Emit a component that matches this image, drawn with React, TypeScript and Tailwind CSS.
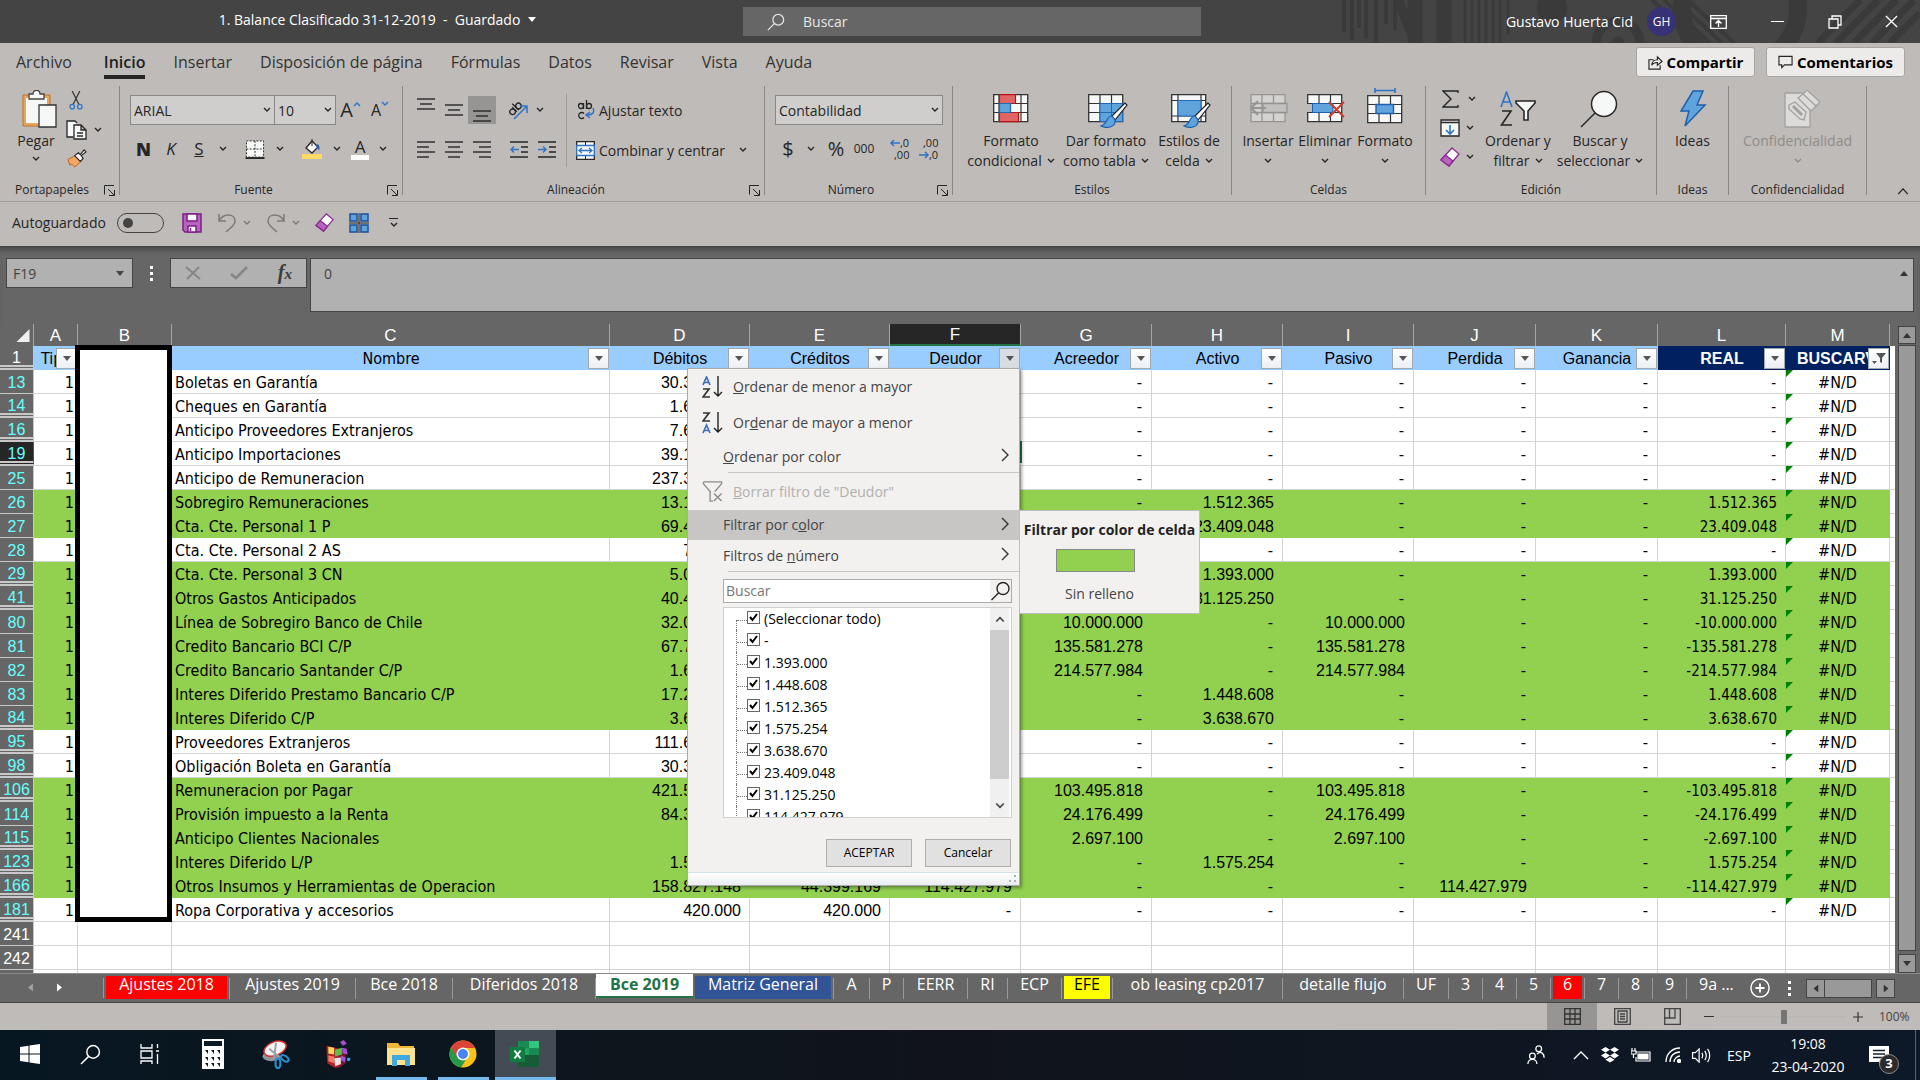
import type { ReactNode } from "react";

// Fondo y tipografía de la interfaz
const UI = "font-['Open_Sans','Noto_Sans',sans-serif]";
const TAHOMA = "font-['DejaVu_Sans_Condensed','DejaVu_Sans',sans-serif]";

/* ---------- Datos de la hoja ---------- */

type Fila = {
  n: string;
  salto?: boolean; // hay filas ocultas debajo
  verde?: boolean;
  nombre: string;
  v: string[]; // D..L
};

const G = "-";

const FILAS: Fila[] = [
  { n: "13", nombre: "Boletas en Garantía", v: ["30.312.450", "", "", G, G, G, G, G, G] },
  { n: "14", salto: true, nombre: "Cheques en Garantía", v: ["1.620.000", "", "", G, G, G, G, G, G] },
  { n: "16", salto: true, nombre: "Anticipo Proveedores Extranjeros", v: ["7.645.120", "", "", G, G, G, G, G, G] },
  { n: "19", salto: true, nombre: "Anticipo Importaciones", v: ["39.120.340", "", "", G, G, G, G, G, G] },
  { n: "25", nombre: "Anticipo de Remuneracion", v: ["237.350.210", "", "", G, G, G, G, G, G] },
  { n: "26", verde: true, nombre: "Sobregiro Remuneraciones", v: ["13.140.220", "", "", G, "1.512.365", G, G, G, "1.512.365"] },
  { n: "27", verde: true, nombre: "Cta. Cte. Personal 1 P", v: ["69.410.300", "", "", G, "23.409.048", G, G, G, "23.409.048"] },
  { n: "28", nombre: "Cta. Cte. Personal 2 AS", v: ["720.000", "", "", G, G, G, G, G, G] },
  { n: "29", salto: true, verde: true, nombre: "Cta. Cte. Personal 3 CN", v: ["5.020.000", "", "", G, "1.393.000", G, G, G, "1.393.000"] },
  { n: "41", salto: true, verde: true, nombre: "Otros Gastos Anticipados", v: ["40.450.100", "", "", G, "31.125.250", G, G, G, "31.125.250"] },
  { n: "80", verde: true, nombre: "Línea de Sobregiro Banco de Chile", v: ["32.000.000", "", "", "10.000.000", G, "10.000.000", G, G, "-10.000.000"] },
  { n: "81", verde: true, nombre: "Credito Bancario BCI C/P", v: ["67.710.400", "", "", "135.581.278", G, "135.581.278", G, G, "-135.581.278"] },
  { n: "82", verde: true, nombre: "Credito Bancario Santander C/P", v: ["1.640.200", "", "", "214.577.984", G, "214.577.984", G, G, "-214.577.984"] },
  { n: "83", verde: true, nombre: "Interes Diferido Prestamo Bancario C/P", v: ["17.230.100", "", "", G, "1.448.608", G, G, G, "1.448.608"] },
  { n: "84", salto: true, verde: true, nombre: "Interes Diferido C/P", v: ["3.638.670", "", "", G, "3.638.670", G, G, G, "3.638.670"] },
  { n: "95", salto: true, nombre: "Proveedores Extranjeros", v: ["111.640.300", "", "", G, G, G, G, G, G] },
  { n: "98", salto: true, nombre: "Obligación Boleta en Garantía", v: ["30.312.450", "", "", G, G, G, G, G, G] },
  { n: "106", salto: true, verde: true, nombre: "Remuneracion por Pagar", v: ["421.530.200", "", "", "103.495.818", G, "103.495.818", G, G, "-103.495.818"] },
  { n: "114", verde: true, nombre: "Provisión impuesto a la Renta", v: ["84.310.500", "", "", "24.176.499", G, "24.176.499", G, G, "-24.176.499"] },
  { n: "115", salto: true, verde: true, nombre: "Anticipo Clientes Nacionales", v: ["", "", "", "2.697.100", G, "2.697.100", G, G, "-2.697.100"] },
  { n: "123", salto: true, verde: true, nombre: "Interes Diferido L/P", v: ["1.575.254", "", "", G, "1.575.254", G, G, G, "1.575.254"] },
  { n: "166", salto: true, verde: true, nombre: "Otros Insumos y Herramientas de Operacion", v: ["158.827.148", "44.399.169", "114.427.979", G, G, G, "114.427.979", G, "-114.427.979"] },
  { n: "181", salto: true, nombre: "Ropa Corporativa y accesorios", v: ["420.000", "420.000", G, G, G, G, G, G, G] },
];

const COLUMNAS = [
  { letra: "A", ancho: "w-[44px]", titulo: "Tipo", tahoma: true },
  { letra: "B", ancho: "w-[94px]", titulo: "" },
  { letra: "C", ancho: "", titulo: "Nombre", tahoma: true },
  { letra: "D", ancho: "w-[140px]", titulo: "Débitos" },
  { letra: "E", ancho: "w-[140px]", titulo: "Créditos" },
  { letra: "F", ancho: "w-[131px]", titulo: "Deudor" },
  { letra: "G", ancho: "w-[131px]", titulo: "Acreedor" },
  { letra: "H", ancho: "w-[131px]", titulo: "Activo" },
  { letra: "I", ancho: "w-[131px]", titulo: "Pasivo" },
  { letra: "J", ancho: "w-[122px]", titulo: "Perdida" },
  { letra: "K", ancho: "w-[122px]", titulo: "Ganancia" },
  { letra: "L", ancho: "w-[128px]", titulo: "REAL", azul: true },
  { letra: "M", ancho: "w-[104px]", titulo: "BUSCARV", azul: true },
];

const HOJAS = [
  { t: "Ajustes 2018", w: "w-[126px]", c: "bg-[#ff0000] text-white" },
  { t: "Ajustes 2019", w: "w-[126px]" },
  { t: "Bce 2018", w: "w-[97px]" },
  { t: "Diferidos 2018", w: "w-[143px]" },
  { t: "Bce 2019", w: "w-[97px]", activa: true },
  { t: "Matriz General", w: "w-[141px]", c: "bg-[#305496] text-white" },
  { t: "A", w: "w-[36px]" },
  { t: "P", w: "w-[34px]" },
  { t: "EERR", w: "w-[64px]" },
  { t: "RI", w: "w-[40px]" },
  { t: "ECP", w: "w-[54px]" },
  { t: "EFE", w: "w-[51px]", c: "bg-[#ffff00] text-black" },
  { t: "ob leasing cp2017", w: "w-[170px]" },
  { t: "detalle flujo", w: "w-[121px]" },
  { t: "UF", w: "w-[45px]" },
  { t: "3", w: "w-[34px]" },
  { t: "4", w: "w-[34px]" },
  { t: "5", w: "w-[34px]" },
  { t: "6", w: "w-[34px]", c: "bg-[#ff0000] text-white" },
  { t: "7", w: "w-[34px]" },
  { t: "8", w: "w-[34px]" },
  { t: "9", w: "w-[34px]" },
];

const VALORES = ["(Seleccionar todo)", "-", "1.393.000", "1.448.608", "1.512.365", "1.575.254", "3.638.670", "23.409.048", "31.125.250", "114.427.979"];

/* ---------- Piezas pequeñas ---------- */

function Chev({ className = "" }: { className?: string }) {
  return (
    <svg viewBox="0 0 8 6" className={`h-[6px] w-[8px] shrink-0 ${className}`} fill="none" stroke="currentColor" strokeWidth="1.4">
      <path d="M1 1l3 3 3-3" />
    </svg>
  );
}

function Flecha({ className = "" }: { className?: string }) {
  return (
    <svg viewBox="0 0 8 5" className={`h-[5px] w-[8px] ${className}`} fill="currentColor">
      <path d="M0 0h8L4 5z" />
    </svg>
  );
}

function Lupa({ className = "" }: { className?: string }) {
  return (
    <svg viewBox="0 0 20 20" className={className} fill="none" stroke="currentColor" strokeWidth="1.4">
      <circle cx="12.5" cy="7.5" r="6" />
      <path d="M8.2 11.8L1 19" />
    </svg>
  );
}

function Btn({ w, label, children, className = "" }: { w: string; label: string; children: ReactNode; className?: string }) {
  return (
    <button type="button" aria-label={label} className={`flex h-7 shrink-0 items-center justify-center ${w} ${className}`}>
      {children}
    </button>
  );
}

function Sep() {
  return <span className="h-[27px] w-px shrink-0 bg-[#a19d9a]" />;
}

function Grupo({ titulo, w, lanzador, children }: { titulo: string; w: string; lanzador?: boolean; children: ReactNode }) {
  return (
    <section aria-label={titulo} className={`flex h-[109px] shrink-0 flex-col border-r border-[#8a8886] ${w}`}>
      <div className="flex h-[96px] w-full shrink-0">{children}</div>
      <div className="flex h-4 shrink-0 items-center">
        <span className="flex-1 text-center text-[12px] leading-4">{titulo}</span>
        {lanzador && (
          <button type="button" aria-label={`Configuración de ${titulo}`} className="mr-px w-[14px]">
            <svg viewBox="0 0 11 11" className="h-[11px] w-[11px]" fill="none" stroke="#262626">
              <path d="M.5 9.500V.500H10M4 4l6 6M10.500 5v5.500H5" />
            </svg>
          </button>
        )}
      </div>
    </section>
  );
}

function Grande({ w, icono, l1, l2, className = "" }: { w: string; icono: ReactNode; l1: string; l2?: string; className?: string }) {
  return (
    <button type="button" className={`flex shrink-0 flex-col items-center pt-1 ${w} ${className}`}>
      <span className="flex h-[41px] items-center justify-center pb-1">{icono}</span>
      <span className="text-[14px] leading-5 whitespace-nowrap">{l1}</span>
      {l2 !== undefined && (
        <span className="flex h-5 items-center gap-[5px] text-[14px] leading-5 whitespace-nowrap">
          {l2}
          <Chev />
        </span>
      )}
    </button>
  );
}

function Lineas({ xs }: { xs: number[][] }) {
  return (
    <svg viewBox={`0 0 18 ${xs.length * 5 - 3}`} className="w-[18px]" stroke="#262626" strokeWidth="1.400">
      {xs.map(([a, b], i) => (
        <path key={i} d={`M${a} ${i * 5 + 1}H${b}`} />
      ))}
    </svg>
  );
}

/* ---------- Iconos de la cinta ---------- */

const iconoPegar = (
  <svg viewBox="0 0 36 38" className="ml-[5px] h-[38px] w-[36px] shrink-0">
    <path d="M2 5h27v31H2z" fill="#e8a65c" stroke="#c0702a" />
    <path d="M5 8h21v25H5z" fill="#f6f8f8" />
    <path d="M8 9V4h4c0-5 7-5 7 0h4v5z" fill="#f6f8f8" stroke="#444" strokeWidth="1.300" />
    <path d="M18 15h17v22H18z" fill="#f6f8f8" stroke="#333" strokeWidth="1.300" />
  </svg>
);
const rejilla = (
  <>
    <path d="M.7.7h34v27H.7z" fill="#f6f8f8" stroke="#333" strokeWidth="1.300" />
    <path d="M0 9.500h35M0 18.500h35M12 0v28M23.500 0v28" stroke="#333" strokeWidth="1.200" />
  </>
);
const pincel = (
  <>
    <path d="M37 9L24 22l3 4L39 11z" fill="#fff" stroke="#222" strokeWidth="1.200" />
    <path d="M24 22c-6 0-4 8-11 10 6 3 15 1 14-6z" fill="#5fa4dc" stroke="#1e5fae" strokeWidth="1.200" />
  </>
);
const iconoCondicional = (
  <svg viewBox="0 0 36 29" className="h-[29px] w-[36px]">
    <path d="M.7.7h34v27H.7z" fill="#f6f8f8" stroke="#333" strokeWidth="1.300" />
    <path d="M0 9.500h35M0 18.500h35M6 0v28M28 0v28" stroke="#333" strokeWidth="1.200" />
    <path d="M6.500.7h16v8.800h-16zM6.500 18.500h19v9.200h-19z" fill="#e06666" stroke="#b8141c" strokeWidth="1.200" />
    <path d="M6.500 9.500h11v9h-11z" fill="#5fa4dc" stroke="#2468b4" strokeWidth="1.200" />
  </svg>
);
const iconoTabla = (
  <svg viewBox="0 0 40 34" className="mt-1 ml-1 h-[34px] w-[40px]">
    {rejilla}
    <path d="M12 9.500h22.500v18H12z" fill="#5fa4dc" stroke="#2468b4" />
    <path d="M23.500 9.500v18M12 18.500h22" stroke="#2468b4" />
    {pincel}
  </svg>
);
const iconoEstilos = (
  <svg viewBox="0 0 40 34" className="mt-1 ml-1 h-[34px] w-[40px]">
    <path d="M.7.7h34v27H.7z" fill="#f6f8f8" stroke="#333" strokeWidth="1.300" />
    <path d="M0 6.500h35M0 22h35M7 0v28M30 0v28" stroke="#333" strokeWidth="1.200" />
    <path d="M7 6.500h23V22H7z" fill="#5fa4dc" stroke="#2468b4" />
    {pincel}
  </svg>
);
const iconoInsertar = (
  <svg viewBox="0 0 38 29" className="ml-[2px] h-[29px] w-[38px]" stroke="#969492" strokeWidth="1.300">
    <path d="M1 .7h34v27H1z" fill="#d4d2d0" />
    <path d="M1 9.500h34M1 18.500h34M12 0v28M23.500 0v28" />
    <path d="M13 9.500h24v9H13z" fill="#c3c1bf" />
    <path d="M16 14H1m7-7l-7 7 7 7" fill="none" strokeWidth="2" />
  </svg>
);
const iconoEliminar = (
  <svg viewBox="0 0 38 29" className="ml-[2px] h-[29px] w-[38px]">
    {rejilla}
    <path d="M0 10h5v8H0z" fill="#bfbbb8" />
    <path d="M5.500 9.500H26v9H5.500z" fill="#5fa4dc" stroke="#1e5fae" />
    <path d="M22 8l15 15M37 8L22 23" stroke="#d03a2b" strokeWidth="2" />
  </svg>
);
const iconoFormato = (
  <svg viewBox="0 0 36 36" className="mb-[5px] h-[36px] w-[36px]">
    <path d="M8 2.500h20M8 0v5M28 0v5" stroke="#2f73c4" strokeWidth="1.600" />
    <g transform="translate(0 7)">
      {rejilla}
      <path d="M9 9.500h17.500v9H9z" fill="#5fa4dc" stroke="#1e5fae" strokeWidth="1.400" />
    </g>
  </svg>
);
const iconoOrdenar = (
  <svg viewBox="0 0 36 36" className="h-[36px] w-[36px]" fill="none" strokeWidth="1.600">
    <path d="M1 16L6.500 1 12 16M3 11h7" stroke="#2f73c4" />
    <path d="M2 20h9L1.500 34H12" stroke="#262626" />
    <path d="M16 10h19v2l-7 8v9h-4v-9l-8-8z" fill="#f6f8f8" stroke="#262626" />
  </svg>
);
const iconoBuscar = (
  <svg viewBox="0 0 38 38" className="mr-[2px] h-[38px] w-[38px]" stroke="#262626" strokeWidth="1.500">
    <circle cx="24" cy="14" r="12.500" fill="#f6f8f8" />
    <path d="M15 23L1 37" />
  </svg>
);
const iconoIdeas = (
  <svg viewBox="0 0 28 37" className="h-[37px] w-[28px]">
    <path d="M14 1h10l-6 14h8L6 36l4-15H2z" fill="#5fa4dc" stroke="#1e5fae" strokeWidth="1.500" />
  </svg>
);
const iconoConfid = (
  <svg viewBox="0 0 36 38" className="ml-2 h-[38px] w-[36px]" stroke="#a3a1a0" strokeWidth="1.300" fill="#dddbda">
    <path d="M1 3h25v34H1z" />
    <path d="M5 15l6-3 11 10-2 8-4-1L5 19z" />
    <path d="M9 16l9 9" strokeWidth="3" />
    <path d="M14 8l6-5 13 12-6 6z" />
    <path d="M19 4l4-4 13 12-4 4z" />
  </svg>
);
function Borrador({ className = "" }: { className?: string }) {
  return (
    <svg viewBox="0 0 20 20" className={className} stroke="#8a2a90" strokeWidth="1.300">
      <path d="M12 1l7 6-10 12-8-6z" fill="#fff" />
      <path d="M5.500 8L13 14l-4 5-8-6z" fill="#b565bd" />
    </svg>
  );
}

/* ---------- Barra de título ---------- */

function BarraTitulo() {
  return (
    <header className="relative flex h-[43px] items-center bg-[#444444] text-[14px] text-white">
      <svg viewBox="0 0 580 43" className="absolute top-0 right-0 h-[43px] w-[580px]" stroke="#3a3a3a" fill="none">
        <path d="M4 0v32M12 0v40M19 0v28M26 0v38M36 0v43M46 0v24M55 0v30" strokeWidth="4" />
        <path d="M75 0v43M104 0v43" strokeWidth="15" />
        <path d="M58 0l14 34" strokeWidth="10" />
        <path d="M125 0v43M132 0v43M139 0v43M146 0v43M153 0v43M160 0v43M168 0v35" strokeWidth="3" />
        <circle cx="212" cy="8" r="15" fill="#3a3a3a" />
        <circle cx="278" cy="43" r="22" strokeWidth="9" />
        <circle cx="278" cy="43" r="6" fill="#3a3a3a" />
        <path d="M312 0l46 43M324 0l46 43M336 0l46 43M348 0l46 43" strokeWidth="4" />
        <circle cx="400" cy="8" r="58" strokeWidth="18" />
        <path d="M478 43L520 0M496 43L538 0M514 43L556 0M532 43L574 0M550 43l30-30" strokeWidth="7" />
      </svg>
      <div className="flex w-[743px] items-center justify-center gap-2 pb-[5px] pl-3">
        <span>1. Balance Clasificado 31-12-2019&nbsp; -&nbsp; Guardado</span>
        <Flecha />
      </div>
      <label className="flex h-[29px] w-[458px] items-center bg-[#666666] pl-6 text-[#e6e6e6]">
        <Lupa className="h-[18px] w-[18px]" />
        <input aria-label="Buscar" placeholder="Buscar" className="ml-[18px] w-80 bg-transparent outline-none placeholder:text-[#e6e6e6]" />
      </label>
      <div className="relative flex flex-1 items-center justify-end">
        <span>Gustavo Huerta Cid</span>
        <span className="ml-[14px] flex h-[29px] w-[29px] items-center justify-center rounded-full bg-[#373277] text-[12px]">GH</span>
        <button type="button" aria-label="Opciones de la cinta" className="ml-[34px]">
          <svg viewBox="0 0 17 14" className="h-[14px] w-[17px]" fill="none" stroke="#fff" strokeWidth="1.300">
            <path d="M.7.700h15.600v12.600H.7zM0 3.500h17M8.500 12V6M5.500 8.500l3-3 3 3" />
          </svg>
        </button>
        <button type="button" aria-label="Minimizar" className="ml-[44px] h-px w-[13px] bg-white" />
        <button type="button" aria-label="Restaurar" className="ml-[44px]">
          <svg viewBox="0 0 14 14" className="h-[14px] w-[14px]" fill="none" stroke="#fff" strokeWidth="1.300">
            <path d="M1 4h9v9H1zM4 4V1h9v9h-3" />
          </svg>
        </button>
        <button type="button" aria-label="Cerrar" className="mr-[22px] ml-[43px]">
          <svg viewBox="0 0 14 14" className="h-[13px] w-[13px]" stroke="#fff" strokeWidth="1.400">
            <path d="M1 1l12 12M13 1L1 13" />
          </svg>
        </button>
      </div>
    </header>
  );
}

/* ---------- Cinta ---------- */

function Cinta() {
  return (
    <div className="border-b border-[#a19d9a] bg-[#bfbbb8]">
      <div className="flex h-[43px] items-start">
        <nav className="flex flex-1 gap-7 pt-1 pl-4 text-[16px] leading-[26px] text-[#333]">
          {["Archivo", "Inicio", "Insertar", "Disposición de página", "Fórmulas", "Datos", "Revisar", "Vista", "Ayuda"].map((t) => (
            <button
              key={t}
              type="button"
              className={`h-8 border-b-4 pt-px ${t === "Inicio" ? "ml-1 border-[#262626] font-semibold text-[#1f1f1f]" : "border-transparent"}`}
            >
              {t}
            </button>
          ))}
        </nav>
        <div className="flex gap-[11px] pt-1 pr-[15px] text-[15px] font-bold">
          <button type="button" className="flex h-[30px] w-[119px] items-center justify-center gap-1 rounded-[3px] border border-[#a8a5a3] bg-[#edebe9]">
            <svg viewBox="0 0 16 16" className="h-[15px] w-[15px]" fill="none" stroke="#262626" strokeWidth="1.200">
              <path d="M6 5H1v10h12v-4M4 11c0-4 3-6 6-6V2l5 5-5 4V8c-3 0-5 1-6 3z" />
            </svg>
            Compartir
          </button>
          <button type="button" className="flex h-[30px] w-[139px] items-center justify-center gap-1 rounded-[3px] border border-[#a8a5a3] bg-[#edebe9]">
            <svg viewBox="0 0 16 14" className="h-[14px] w-[15px]" fill="none" stroke="#262626" strokeWidth="1.200">
              <path d="M1 1h14v9H7l-3 3v-3H1z" />
            </svg>
            Comentarios
          </button>
        </div>
      </div>

      <div className="flex h-[115px] text-[#262626]">
        <Grupo titulo="Portapapeles" w="w-[120px]" lanzador>
          <button type="button" className="ml-4 flex w-[40px] flex-col items-center pt-1 text-[14px] leading-5">
            {iconoPegar}
            <span className="mt-[3px]">Pegar</span>
            <Chev className="mt-[5px]" />
          </button>
          <div className="flex flex-col pl-[7px]">
            <Btn w="w-[26px]" label="Cortar">
              <svg viewBox="0 0 14 20" className="h-[19px] w-[14px]" fill="none" strokeWidth="1.300">
                <path d="M3 0l7 14M11 0L4 14" stroke="#333" />
                <circle cx="3" cy="16.500" r="2.400" stroke="#2f73c4" />
                <circle cx="11" cy="16.500" r="2.400" stroke="#2f73c4" />
              </svg>
            </Btn>
            <div className="flex items-center pt-[2px]">
              <Btn w="w-[26px]" label="Copiar">
                <svg viewBox="0 0 21 20" className="h-[20px] w-[21px]" fill="#f6f8f8" stroke="#262626" strokeWidth="1.300">
                  <path d="M7 17H1V1h8l2 2" />
                  <path d="M8 5h7l5 5v9H8zM15 5v5h5M11 13h6M11 16h6" />
                </svg>
              </Btn>
              <Btn w="w-[18px]" label="Opciones de copiar">
                <Chev />
              </Btn>
            </div>
            <Btn w="w-[26px]" label="Copiar formato">
              <svg viewBox="0 0 22 20" className="h-[19px] w-[21px]">
                <path d="M2 11l8-4 6 6-7 6-3-3-2 1z" fill="#f0a860" stroke="#c0601c" />
                <path d="M9 7l4-3 2 2 4-5 2 2-5 4 2 3-3 3z" fill="#f6f8f8" stroke="#262626" strokeWidth="1.200" />
              </svg>
            </Btn>
          </div>
        </Grupo>

        <Grupo titulo="Fuente" w="w-[283px]" lanzador>
          <div className="pt-[9px] pl-[10px]">
            <div className="flex items-center">
              <Combo w="w-[145px]" label="Fuente" valor="ARIAL" />
              <Combo w="w-[62px]" label="Tamaño" valor="10" />
              <Btn w="w-[31px]" label="Aumentar tamaño">
                <span className="text-[20px] leading-5">A</span>
                <Chev className="mb-3 rotate-180 text-[#2f73c4]" />
              </Btn>
              <Btn w="w-[28px]" label="Disminuir tamaño">
                <span className="text-[16px] leading-5">A</span>
                <Chev className="mb-3 text-[#2f73c4]" />
              </Btn>
            </div>
            <div className="mt-[10px] flex items-center">
              <Btn w="w-[27px]" label="Negrita"><span className="text-[18px] font-extrabold">N</span></Btn>
              <Btn w="w-[28px]" label="Cursiva"><span className="text-[17px] italic">K</span></Btn>
              <Btn w="w-[28px]" label="Subrayado"><span className="text-[17px] underline">S</span></Btn>
              <Btn w="w-[20px]" label="Opciones de subrayado"><Chev /></Btn>
              <span className="ml-1"><Sep /></span>
              <Btn w="w-[36px]" label="Bordes">
                <svg viewBox="0 0 20 20" className="h-[19px] w-[20px]" fill="#f6f8f8" stroke="#262626">
                  <path d="M1 1h18v17H1zM10 1v17M1 9.500h18" strokeDasharray="2 1.500" />
                  <path d="M0 19h20" strokeWidth="2" />
                </svg>
              </Btn>
              <Btn w="w-[14px]" label="Opciones de bordes"><Chev /></Btn>
              <span className="ml-[6px]"><Sep /></span>
              <Btn w="w-[38px]" label="Color de relleno">
                <svg viewBox="0 0 20 20" className="h-[20px] w-[20px]">
                  <path d="M10 2l6 6-6 6-6-5z" fill="#f6f8f8" stroke="#262626" strokeWidth="1.300" />
                  <path d="M10 7V0" stroke="#262626" />
                  <path d="M15 5c3 1 3 4 2 7-1-3-2-4-3-5z" fill="#2f5fb4" />
                  <path d="M0 15h20v5H0z" fill="#ffd966" />
                </svg>
              </Btn>
              <Btn w="w-[12px]" label="Opciones de relleno"><Chev /></Btn>
              <Btn w="w-[34px]" label="Color de fuente">
                <span className="border-b-[5px] border-white px-1 text-[17px] leading-[17px]">A</span>
              </Btn>
              <Btn w="w-[12px]" label="Opciones de color"><Chev /></Btn>
            </div>
          </div>
        </Grupo>

        <Grupo titulo="Alineación" w="w-[362px]" lanzador>
          <div className="pt-[10px] pl-[9px]">
            <div className="flex items-center">
              <Btn w="w-[28px]" label="Alinear arriba" className="pb-3"><Lineas xs={[[0, 18], [3, 15], [0, 18]]} /></Btn>
              <Btn w="w-[28px]" label="Alinear en el medio"><Lineas xs={[[0, 18], [3, 15], [0, 18]]} /></Btn>
              <Btn w="w-[28px]" label="Alinear abajo" className="bg-[#979593] pt-3"><Lineas xs={[[0, 18], [3, 15], [0, 18]]} /></Btn>
              <span className="ml-1"><Sep /></span>
              <Btn w="w-[36px]" label="Orientación">
                <svg viewBox="0 0 22 20" className="h-[20px] w-[22px] overflow-visible" fill="none" strokeWidth="1.300">
                  <g transform="rotate(-45 7 9)" stroke="#262626">
                    <circle cx="4" cy="10" r="2.800" />
                    <path d="M7 6.500V13M9.500 4v9" />
                    <circle cx="12.300" cy="10" r="2.800" />
                  </g>
                  <path d="M7 19L19 7M13 6h7v7" stroke="#2f73c4" strokeWidth="1.500" />
                </svg>
              </Btn>
              <Btn w="w-[8px]" label="Opciones de orientación"><Chev /></Btn>
            </div>
            <div className="mt-[11px] flex items-center">
              <Btn w="w-[28px]" label="Alinear a la izquierda"><Lineas xs={[[0, 18], [0, 12], [0, 18], [0, 12]]} /></Btn>
              <Btn w="w-[28px]" label="Centrar"><Lineas xs={[[0, 18], [3, 15], [0, 18], [3, 15]]} /></Btn>
              <Btn w="w-[28px]" label="Alinear a la derecha"><Lineas xs={[[0, 18], [6, 18], [0, 18], [6, 18]]} /></Btn>
              <span className="ml-1"><Sep /></span>
              <Btn w="w-[38px]" label="Disminuir sangría">
                <svg viewBox="0 0 18 17" className="w-[18px]" fill="none" stroke="#262626" strokeWidth="1.400">
                  <path d="M0 1h18M11 6h7M11 11h7M0 16h18" />
                  <path d="M9 8.500H1m3-3l-3 3 3 3" stroke="#2f73c4" />
                </svg>
              </Btn>
              <Btn w="w-[18px]" label="Aumentar sangría">
                <svg viewBox="0 0 18 17" className="w-[18px]" fill="none" stroke="#262626" strokeWidth="1.400">
                  <path d="M0 1h18M11 6h7M11 11h7M0 16h18" />
                  <path d="M0 8.500h8m-3-3l3 3-3 3" stroke="#2f73c4" />
                </svg>
              </Btn>
            </div>
          </div>
          <span className="mt-[7px] ml-[10px] h-[74px] w-px bg-[#a19d9a]" />
          <div className="pt-[10px] pl-[9px] text-[14px]">
            <button type="button" className="flex h-7 items-center gap-1">
              <svg viewBox="0 0 19 20" className="h-[20px] w-[19px]" fill="none" stroke="#262626" strokeWidth="1.300">
                <circle cx="5" cy="6" r="2.500" />
                <path d="M7.500 3v6M10.500 0v9" />
                <circle cx="13" cy="6" r="2.500" />
                <path d="M8 13.500a3 3 0 1 0 0 4" />
                <path d="M17 8c2 5-1 7-6 7m3-3l-4 3 4 3" stroke="#2f73c4" strokeWidth="1.500" />
              </svg>
              Ajustar texto
            </button>
            <button type="button" className="mt-[12px] flex h-7 items-center gap-1">
              <svg viewBox="0 0 19 19" className="h-[19px] w-[19px]">
                <path d="M.7.700h17.600v17.600H.7z" fill="#f6f8f8" stroke="#262626" strokeWidth="1.300" />
                <path d="M9.500 0v19" stroke="#262626" />
                <path d="M.7 4.500h17.600v10H.7z" fill="#f6f8f8" stroke="#2f73c4" strokeWidth="1.300" />
                <path d="M3 9.500h13M6 7L3 9.500 6 12M13 7l3 2.500-3 2.500" fill="none" stroke="#2f73c4" strokeWidth="1.300" />
              </svg>
              Combinar y centrar
              <Chev className="ml-[10px]" />
            </button>
          </div>
        </Grupo>

        <Grupo titulo="Número" w="w-[188px]" lanzador>
          <div className="pt-[9px] pl-[10px]">
            <Combo w="w-[168px]" label="Formato de número" valor="Contabilidad" />
            <div className="mt-[10px] flex items-center">
              <Btn w="w-[26px]" label="Moneda"><span className="text-[20px]">$</span></Btn>
              <Btn w="w-[20px]" label="Opciones de moneda"><Chev /></Btn>
              <Btn w="w-[30px]" label="Porcentaje"><span className="text-[20px]">%</span></Btn>
              <Btn w="w-[26px]" label="Millares"><span className="text-[12px]">000</span></Btn>
              <span className="ml-1"><Sep /></span>
              <Btn w="w-[38px]" label="Aumentar decimales">
                <svg viewBox="0 0 20 22" className="h-[22px] w-[20px] overflow-visible" fill="#262626" fontSize="11">
                  <text x="10" y="9">,0</text>
                  <text x="4" y="21">,00</text>
                  <path d="M10 5H1m3-3L1 5l3 3" fill="none" stroke="#2f73c4" strokeWidth="1.500" />
                </svg>
              </Btn>
              <Btn w="w-[20px]" label="Disminuir decimales">
                <svg viewBox="0 0 20 22" className="h-[22px] w-[20px] overflow-visible" fill="#262626" fontSize="11">
                  <text x="4" y="9">,00</text>
                  <text x="10" y="21">,0</text>
                  <path d="M0 17h9m-3-3l3 3-3 3" fill="none" stroke="#2f73c4" strokeWidth="1.500" />
                </svg>
              </Btn>
            </div>
          </div>
        </Grupo>

        <Grupo titulo="Estilos" w="w-[279px]">
          <Grande w="w-[100px] ml-2" icono={iconoCondicional} l1="Formato" l2="condicional" />
          <Grande w="w-[90px]" icono={iconoTabla} l1="Dar formato" l2="como tabla" />
          <Grande w="w-[76px]" icono={iconoEstilos} l1="Estilos de" l2="celda" />
        </Grupo>

        <Grupo titulo="Celdas" w="w-[194px]">
          <Grande w="w-[56px] ml-2" icono={iconoInsertar} l1="Insertar" l2="" />
          <Grande w="w-[58px]" icono={iconoEliminar} l1="Eliminar" l2="" />
          <Grande w="w-[62px]" icono={iconoFormato} l1="Formato" l2="" />
        </Grupo>

        <Grupo titulo="Edición" w="w-[231px]">
          <div className="flex w-[54px] flex-col pl-[10px]">
            <button type="button" aria-label="Autosuma" className="flex h-[25px] items-center gap-[9px] pl-[6px]">
              <svg viewBox="0 0 17 18" className="h-[18px] w-[17px]" fill="none" stroke="#262626" strokeWidth="1.400">
                <path d="M16 3V1H1l8 8-8 8h15v-2" />
              </svg>
              <Chev />
            </button>
            <button type="button" aria-label="Rellenar" className="mt-1 flex h-[26px] items-center gap-[6px] pl-[4px]">
              <svg viewBox="0 0 20 18" className="h-[18px] w-[20px]" fill="#f6f8f8" stroke="#262626" strokeWidth="1.300">
                <path d="M1 1h18v16H1zM1 3.500h18" />
                <path d="M10 6v9m-4-4l4 4 4-4" fill="none" stroke="#2f73c4" strokeWidth="1.600" />
              </svg>
              <Chev />
            </button>
            <button type="button" aria-label="Borrar" className="mt-[3px] flex h-[26px] items-center gap-[6px] pl-[4px]">
              <Borrador className="h-[20px] w-[20px]" />
              <Chev />
            </button>
          </div>
          <Grande w="w-[76px]" icono={iconoOrdenar} l1="Ordenar y" l2="filtrar" />
          <Grande w="w-[88px]" icono={iconoBuscar} l1="Buscar y" l2="seleccionar" />
        </Grupo>

        <Grupo titulo="Ideas" w="w-[72px]">
          <Grande w="w-full" icono={iconoIdeas} l1="Ideas" />
        </Grupo>

        <Grupo titulo="Confidencialidad" w="w-[138px]">
          <Grande w="w-full" icono={iconoConfid} l1="Confidencialidad" l2="" className="text-[#8f8c8a]" />
        </Grupo>

        <div className="flex flex-1 items-end justify-end pr-[11px] pb-[6px]">
          <button type="button" aria-label="Contraer la cinta">
            <svg viewBox="0 0 13 8" className="h-[7px] w-[12px]" fill="none" stroke="#262626" strokeWidth="1.500">
              <path d="M1 7l5.500-6L12 7" />
            </svg>
          </button>
        </div>
      </div>
    </div>
  );
}

function Combo({ w, label, valor }: { w: string; label: string; valor: string }) {
  return (
    <span className={`-mr-px grid h-[30px] items-center border border-[#8a8886] bg-[#cfcecd] ${w}`}>
      <select aria-label={label} className="col-start-1 row-start-1 h-7 w-full appearance-none bg-transparent pl-[3px] text-[14px] outline-none">
        <option>{valor}</option>
      </select>
      <Chev className="pointer-events-none col-start-1 row-start-1 mr-[3px] justify-self-end" />
    </span>
  );
}

function AccesoRapido() {
  return (
    <div className="flex h-[44px] items-center bg-[#bfbbb8] pb-[3px] pl-3 text-[14px] text-[#262626]">
      <label htmlFor="autog" className="w-[105px]">Autoguardado</label>
      <span className="flex h-5 w-[47px] items-center rounded-full border border-[#444] px-[5px]">
        <input id="autog" type="checkbox" role="switch" className="h-[10px] w-[10px] appearance-none rounded-full bg-[#444]" />
      </span>
      <button type="button" aria-label="Guardar" className="ml-[18px]">
        <svg viewBox="0 0 20 20" className="h-5 w-5" stroke="#7d1e86" strokeWidth="1.500">
          <path d="M1 1h18v18H3l-2-2z" fill="#b565bd" />
          <path d="M5 1h10v7H5zM6 13h8v6H6z" fill="#f6f8f8" />
          <path d="M8.500 15v3" />
        </svg>
      </button>
      {[false, true].map((rehacer) => (
        <span key={String(rehacer)} className="ml-4 flex items-center gap-[7px] text-[#7c7977]">
          <button type="button" aria-label={rehacer ? "Rehacer" : "Deshacer"}>
            <svg viewBox="0 0 18 20" className={`h-5 w-[18px] ${rehacer ? "-scale-x-100" : ""}`} fill="none" stroke="currentColor" strokeWidth="1.500">
              <path d="M1 1v7h7M1 8c4-8 16-8 16 0 0 3-2 5-9 11" />
            </svg>
          </button>
          <Chev />
        </span>
      ))}
      <button type="button" aria-label="Borrar" className="ml-[15px]">
        <Borrador className="h-[19px] w-[19px]" />
      </button>
      <button type="button" aria-label="Inmovilizar paneles" className="ml-[15px]">
        <svg viewBox="0 0 20 20" className="h-[20px] w-[20px]" fill="#5fa4dc" stroke="#1e4f9a" strokeWidth="1.500">
          <path d="M1 1h7v7H1zM12 1h7v7h-7zM1 12h7v7H1zM12 12h7v7h-7z" />
          <path d="M10 0v20M0 10h20" stroke="#262626" strokeWidth="1" />
        </svg>
      </button>
      <button type="button" aria-label="Personalizar" className="ml-[20px] flex flex-col items-center gap-[3px]">
        <span className="h-px w-[9px] bg-[#262626]" />
        <Chev />
      </button>
    </div>
  );
}

function BarraFormulas() {
  return (
    <div className="flex h-[78px] items-start border-t border-[#444] bg-[#666666] px-[6px] pt-[11px] text-[14px] text-[#444] shadow-[inset_0_6px_5px_-3px_#4a4a4a]">
      <div className="flex h-[30px] w-[127px] items-center border border-[#444] bg-[#b1b1b1] pr-2">
        <input aria-label="Cuadro de nombres" defaultValue="F19" className="w-full bg-transparent pl-[6px] outline-none" />
        <Flecha className="shrink-0" />
      </div>
      <span className="mx-[17px] flex h-[30px] flex-col justify-center gap-[3px]">
        <i className="h-[3px] w-[3px] bg-white" />
        <i className="h-[3px] w-[3px] bg-white" />
        <i className="h-[3px] w-[3px] bg-white" />
      </span>
      <div className="flex h-[30px] w-[137px] items-center justify-between border border-[#444] bg-[#b1b1b1] px-[14px]">
        <button type="button" aria-label="Cancelar entrada">
          <svg viewBox="0 0 16 14" className="h-[14px] w-[16px]" stroke="#868686" strokeWidth="2"><path d="M1 1l14 12M14 1L2 13" /></svg>
        </button>
        <button type="button" aria-label="Introducir">
          <svg viewBox="0 0 18 14" className="h-[14px] w-[18px]" fill="none" stroke="#868686" strokeWidth="2.500"><path d="M1 8l5 4L17 1" /></svg>
        </button>
        <button type="button" aria-label="Insertar función" className="font-['Liberation_Serif',serif] text-[20px] leading-5 font-bold text-[#3c3c3c] italic">
          f<span className="text-[15px]">x</span>
        </button>
      </div>
      <div className="ml-[3px] flex h-[54px] flex-1 justify-between border border-[#444] bg-[#b1b1b1]">
        <input aria-label="Barra de fórmulas" defaultValue="0" className="h-[29px] flex-1 bg-transparent pl-[13px] outline-none" />
        <button type="button" aria-label="Contraer" className="mt-3 mr-[5px] flex h-2">
          <Flecha className="rotate-180 text-[#333]" />
        </button>
      </div>
    </div>
  );
}

/* ---------- Menú de filtro ---------- */

function Angulo() {
  return (
    <svg viewBox="0 0 8 14" className="mb-[3px] h-[14px] w-[8px]" fill="none" stroke="#333" strokeWidth="1.400">
      <path d="M1 1l6 6-6 6" />
    </svg>
  );
}

function IconoAZ({ inverso }: { inverso?: boolean }) {
  return (
    <svg viewBox="0 0 21 22" className="h-[22px] w-[21px]" fill="none" strokeWidth="1.700">
      <path d="M1 9L4.500 1 8 9M2 6.500h5" stroke="#3a6fc0" transform={inverso ? "translate(0 12)" : undefined} />
      <path d="M1 13h6l-6 8h7" stroke="#333" transform={inverso ? "translate(0 -12)" : undefined} />
      <path d="M16 0v20m-4-4l4 4 4-4" stroke="#222" strokeWidth="1.400" />
    </svg>
  );
}

function MenuFiltro() {
  return (
    <div role="menu" className={`absolute top-[22px] right-px z-20 w-[333px] border border-[#ababab] bg-[#f3f1f0] text-left text-[14px] text-[#444] shadow-[2px_2px_3px_rgba(0,0,0,0.35)] ${UI}`}>
      <button type="button" role="menuitem" className="flex h-9 w-full items-center gap-[10px] pl-[14px]">
        <IconoAZ />
        <span><u>O</u>rdenar de menor a mayor</span>
      </button>
      <button type="button" role="menuitem" className="flex h-9 w-full items-center gap-[10px] pl-[14px]">
        <IconoAZ inverso />
        <span>Or<u>d</u>enar de mayor a menor</span>
      </button>
      <button type="button" role="menuitem" className="flex h-[31px] w-full items-center justify-between pr-[10px] pl-[35px]">
        <span><u>O</u>rdenar por color</span>
        <Angulo />
      </button>
      <hr className="ml-10 border-[#c8c6c4]" />
      <button type="button" role="menuitem" disabled className="flex h-[37px] w-full items-center gap-[10px] pl-[14px] text-[#b1afad]">
        <svg viewBox="0 0 21 22" className="h-[21px] w-[21px]" fill="none" stroke="#8a8a8a" strokeWidth="1.400">
          <path d="M1 1h19v2l-7 8M1 1v2l7 8v10h3M12 13l8 8M20 13l-8 8" />
        </svg>
        <span><u>B</u>orrar filtro de "Deudor"</span>
      </button>
      <div className="relative">
        <button type="button" role="menuitem" className="flex h-[30px] w-full items-center justify-between bg-[#c8c6c4] pr-[10px] pl-[35px]">
          <span>Filtrar por c<u>o</u>lor</span>
          <Angulo />
        </button>
        <div role="menu" className="absolute top-0 left-full w-[181px] border border-[#c0bebc] bg-[#f3f1f0] pb-[9px]">
          <p className="mt-[9px] text-center text-[14px] leading-5 font-bold whitespace-nowrap text-[#222]">Filtrar por color de celda</p>
          <button type="button" aria-label="Verde" className="mt-[9px] ml-9 block h-[23px] w-[79px] border border-[#888] bg-[#92d050]" />
          <button type="button" className="mt-3 ml-[45px] block leading-5">Sin relleno</button>
        </div>
      </div>
      <button type="button" role="menuitem" className="flex h-[31px] w-full items-center justify-between pr-[10px] pl-[35px]">
        <span>Filtros de <u>n</u>úmero</span>
        <Angulo />
      </button>
      <hr className="ml-10 border-[#c8c6c4]" />
      <div className="mt-[7px] mr-[7px] ml-[35px]">
        <div className="flex h-[24px] items-center border border-[#ababab] bg-white">
          <input aria-label="Buscar valores" placeholder="Buscar" className="min-w-0 flex-1 pl-[2px] text-[14px] outline-none placeholder:text-[#777]" />
          <span className="flex h-full w-[21px] items-center bg-[#f3f1f0] text-[#262626]">
            <Lupa className="h-[20px] w-[21px]" />
          </span>
        </div>
        <div className="mt-1 flex h-[211px] overflow-hidden border border-[#d0d0d0] bg-white">
          <ul className="ml-3 flex-1">
            {VALORES.map((v, i) => (
              <li key={v} className="flex h-[22px]">
                <span className={`w-px border-l border-dotted border-[#777] ${i === 0 ? "mt-3" : ""}`} />
                <span className="h-[13px] w-[10px] border-b border-dotted border-[#777]" />
                <label className="flex items-center gap-[4px] text-[14px] leading-5 text-black">
                  <span className="relative -mt-1 h-[13px] w-[13px]">
                    <input type="checkbox" defaultChecked className="block h-[13px] w-[13px] appearance-none border border-[#666] bg-white" />
                    <svg viewBox="0 0 13 13" className="pointer-events-none absolute inset-0 h-[13px] w-[13px]" fill="none" stroke="#000" strokeWidth="2">
                      <path d="M3 6l2.500 3L10 3" />
                    </svg>
                  </span>
                  {v}
                </label>
              </li>
            ))}
          </ul>
          <div className="mr-[2px] flex w-[19px] flex-col items-center bg-[#f0f0f0]">
            <Chev className="my-2 scale-125 rotate-180" />
            <span className="h-[149px] w-full bg-[#cdcdcd]" />
            <Chev className="mt-6 scale-125" />
          </div>
        </div>
        <div className="flex justify-end gap-[13px] pt-[21px] pr-px pb-[5px] text-[12px] text-black">
          <button type="button" className="h-[28px] w-[86px] border border-[#adadad] bg-[#e1e1e1]">ACEPTAR</button>
          <button type="button" className="h-[28px] w-[86px] border border-[#adadad] bg-[#e1e1e1]">Cancelar</button>
        </div>
      </div>
      <div className="flex h-[13px] items-end justify-end border-t border-[#d8e2ec] bg-linear-to-b from-white to-[#e9ecf1] p-[3px]">
        <svg viewBox="0 0 7 7" className="h-[7px] w-[7px]" fill="#b0b0b0">
          <path d="M5 0h2v2H5zM5 5h2v2H5zM0 5h2v2H0z" />
        </svg>
      </div>
    </div>
  );
}

/* ---------- Hoja ---------- */

const CELDA = "h-6 border-r border-b px-0 pt-[2px] pb-0 whitespace-nowrap";

function Hoja() {
  return (
    <main className="flex h-[649px] bg-[#666666]">
      <div className="min-w-0 flex-1 overflow-hidden">
        <table className="w-full table-fixed border-separate border-spacing-0 bg-white font-['Liberation_Sans',Arial,sans-serif] text-[16px] leading-5 text-black">
          <colgroup>
            <col className="w-[34px]" />
            {COLUMNAS.map((c) => (
              <col key={c.letra} className={c.ancho} />
            ))}
            <col className="w-[5px]" />
          </colgroup>
          <thead>
            <tr className="bg-[#666666] text-white">
              <th className="h-[22px] border-r border-[#a6a6a6] p-0">
                <svg viewBox="0 0 14 14" className="ml-4 h-[13px] w-[14px]" fill="#f0f0f0">
                  <path d="M14 0v14H0z" />
                </svg>
              </th>
              {COLUMNAS.map((c) => (
                <th
                  key={c.letra}
                  scope="col"
                  className={`h-[22px] border-r border-[#a6a6a6] px-0 pt-[2px] pb-0 text-[17px] font-normal ${c.letra === "F" ? "border-b-2 border-b-[#217346] bg-[#262626] leading-[18px]" : ""}`}
                >
                  {c.letra}
                </th>
              ))}
              <th className="p-0" />
            </tr>
            <tr className="bg-[#99ccff]">
              <th scope="row" className="h-6 border-r border-b-[5px] border-double border-[#c8c8c8] bg-[#666666] px-0 pt-[5px] pb-0 leading-[14px] font-normal text-white">1</th>
              {COLUMNAS.map((c) => (
                <th
                  key={c.letra}
                  scope="col"
                  className={`relative h-6 px-0 pt-[2px] pb-0 leading-5 whitespace-nowrap ${c.tahoma ? TAHOMA : ""} ${c.azul ? "bg-[#002060] font-bold text-white" : "font-normal"}`}
                >
                  {c.letra === "B" ? (
                    /* tapa la columna de cuentas */
                    <span className="absolute -top-px -left-[3px] z-10 h-[577px] w-[97px] border-[5px] border-black bg-white" />
                  ) : (
                    <>
                      <span className={c.letra === "M" ? "block pl-[11px] text-left" : ""}>{c.titulo}</span>
                      <button
                        type="button"
                        aria-label={`Filtrar ${c.titulo}`}
                        className={`absolute top-[2px] right-px flex h-[21px] w-[21px] items-center justify-center border border-[#a0a8b0] text-[#555] ${c.letra === "F" ? "bg-[#d8dde4]" : "bg-linear-to-b from-white to-[#eceff4]"}`}
                      >
                        {c.letra === "M" ? (
                          <svg viewBox="0 0 14 12" className="h-[12px] w-[14px]" fill="#555">
                            <path d="M4 0h10l-4 5v5l-2-1V5zM0 8h5L2.500 11z" />
                          </svg>
                        ) : (
                          <Flecha />
                        )}
                      </button>
                      {c.letra === "F" && <MenuFiltro />}
                    </>
                  )}
                </th>
              ))}
              <th className="bg-white p-0" />
            </tr>
          </thead>
          <tbody>
            {FILAS.map((f) => {
              const borde = f.verde ? "border-[#92d050]" : "border-[#d4d4d4]";
              return (
                <tr key={f.n} className={f.verde ? "bg-[#92d050]" : ""}>
                  <th
                    scope="row"
                    className={`h-6 border-r px-0 pb-0 font-normal text-[#66ffff] ${f.salto ? "border-b-[5px] border-double pt-[5px] leading-[14px]" : "border-b pt-[2px] leading-5"} ${f.n === "19" ? "border-[#c8c8c8] border-r-[#217346] bg-[#262626]" : "border-[#c8c8c8] bg-[#666666]"}`}
                  >
                    {f.n}
                  </th>
                  <td className={`${CELDA} ${borde} pr-[3px] text-right ${TAHOMA}`}>1</td>
                  <td className={`${CELDA} ${borde}`} />
                  <td className={`${CELDA} ${borde} pl-[3px] ${TAHOMA}`}>{f.nombre}</td>
                  {f.v.map((v, i) => (
                    <td key={i} className={`${CELDA} ${borde} relative pr-2 text-right ${i === 8 ? `text-[15px] ${TAHOMA}` : ""}`}>
                      {v === G ? <span className="pr-px">-</span> : v}
                      {/* borde de la celda seleccionada */}
                      {f.n === "19" && i === 2 && <span className="absolute -top-px -right-[2px] h-6 w-[3px] border-b-2 border-white bg-[#217346]" />}
                    </td>
                  ))}
                  <td className={`${CELDA} ${borde} relative text-center ${TAHOMA}`}>
                    <svg viewBox="0 0 7 7" className="absolute top-0 left-0 h-[7px] w-[7px]" fill="#008000">
                      <path d="M0 0h7L0 7z" />
                    </svg>
                    #N/D
                  </td>
                  <td className="border-b border-[#d4d4d4] bg-white p-0" />
                </tr>
              );
            })}
            {["241", "242", ""].map((n) => (
              <tr key={n}>
                <th scope="row" className="h-6 border-r border-b border-[#c8c8c8] bg-[#666666] px-0 pt-[2px] pb-0 font-normal text-white">{n}</th>
                {COLUMNAS.map((c) => (
                  <td key={c.letra} className={`${CELDA} border-[#d4d4d4]`} />
                ))}
                <td className="border-b border-[#d4d4d4] p-0" />
              </tr>
            ))}
          </tbody>
        </table>
      </div>
      <div className="flex w-[25px] flex-col pt-[2px] pr-1 pl-[3px]">
        <button type="button" aria-label="Subir" className="flex h-[18px] items-center justify-center border border-[#444] bg-[#999] text-[#333]">
          <Flecha className="rotate-180" />
        </button>
        <span className="mt-px flex-1 border border-[#444] bg-[#999]" />
        <button type="button" aria-label="Bajar" className="mt-[3px] flex h-[19px] items-center justify-center border border-[#444] bg-[#999] text-[#333]">
          <Flecha />
        </button>
      </div>
    </main>
  );
}

function Pestanas() {
  return (
    <div className="flex h-[30px] items-start border-t border-b border-t-[#8a8a8a] border-b-[#444] bg-[#666666] text-[16px] leading-5 text-white">
      <div className="flex h-[27px] w-[103px] items-center gap-6 pl-7">
        <button type="button" aria-label="Hojas anteriores" className="text-[#a0a0a0]">
          <svg viewBox="0 0 5 8" className="h-[9px] w-[5px]" fill="currentColor"><path d="M5 0v8L0 4z" /></svg>
        </button>
        <button type="button" aria-label="Hojas siguientes">
          <svg viewBox="0 0 5 8" className="h-[9px] w-[5px]" fill="currentColor"><path d="M0 0v8l5-4z" /></svg>
        </button>
      </div>
      <span className="mt-1 h-5 w-px bg-[#999]" />
      {HOJAS.map((h) =>
        h.activa ? (
          <button key={h.t} type="button" className={`h-6 shrink-0 border-b-2 border-[#217346] bg-white pb-px leading-[19px] font-bold whitespace-nowrap text-[#217346] ${h.w}`}>
            {h.t}
          </button>
        ) : (
          <span key={h.t} className={`flex h-[25px] shrink-0 items-end ${h.w}`}>
            <button type="button" className={`mx-[2px] flex h-[23px] min-w-0 flex-1 items-start justify-center leading-[17px] whitespace-nowrap ${h.c ?? ""}`}>{h.t}</button>
            <span className="h-[21px] w-px bg-[#999]" />
          </span>
        ),
      )}
      <span className="ml-3 leading-[21px] whitespace-nowrap">9a ...</span>
      <div className="flex h-[28px] flex-1 items-center justify-end pr-[25px]">
        <button type="button" aria-label="Hoja nueva" className="mr-[18px]">
          <svg viewBox="0 0 22 22" className="h-[20px] w-[20px]" fill="none" stroke="#fff" strokeWidth="1.600">
            <circle cx="11" cy="11" r="10" />
            <path d="M11 6v10M6 11h10" strokeWidth="2" />
          </svg>
        </button>
        <span className="mr-[15px] flex flex-col gap-[3px]">
          <i className="h-[3px] w-[3px] bg-white" />
          <i className="h-[3px] w-[3px] bg-white" />
          <i className="h-[3px] w-[3px] bg-white" />
        </span>
        <button type="button" aria-label="Izquierda" className="flex h-[19px] w-[19px] items-center justify-center border border-[#444] bg-[#999] text-[#333]">
          <Flecha className="rotate-90" />
        </button>
        <span className="h-[19px] w-[47px] border border-l-0 border-[#444] bg-[#999]" />
        <button type="button" aria-label="Derecha" className="ml-1 flex h-[19px] w-[19px] items-center justify-center border border-[#444] bg-[#999] text-[#333]">
          <Flecha className="-rotate-90" />
        </button>
      </div>
    </div>
  );
}

function BarraEstado() {
  return (
    <div className="flex h-[27px] items-center justify-end bg-[#bfbbb8] pr-[10px] text-[12px] text-[#444]">
      <button type="button" aria-label="Normal" className="flex h-full w-[50px] items-center justify-center bg-[#979593]">
        <svg viewBox="0 0 17 17" className="h-[17px] w-[17px]" fill="none" stroke="#333" strokeWidth="1.300">
          <path d="M.7.700h15.600v15.600H.7zM0 6h17M0 11h17M6 0v17M11 0v17" />
        </svg>
      </button>
      <button type="button" aria-label="Diseño de página" className="flex h-full w-[50px] items-center justify-center">
        <svg viewBox="0 0 17 17" className="h-[17px] w-[17px]" fill="none" stroke="#444" strokeWidth="1.300">
          <path d="M.7.700h15.600v15.600H.7zM4 3h9v11H4zM6 6h5M6 8.500h5M6 11h5" />
        </svg>
      </button>
      <button type="button" aria-label="Vista previa de salto" className="flex h-full w-[50px] items-center justify-center">
        <svg viewBox="0 0 17 17" className="h-[17px] w-[17px]" fill="none" stroke="#444" strokeWidth="1.300">
          <path d="M.7.700h15.600v15.600H.7zM0 10h11V0M5.500 10V0" />
        </svg>
      </button>
      <button type="button" aria-label="Alejar" className="ml-[7px] h-px w-[10px] bg-[#333]" />
      <input
        type="range"
        aria-label="Zoom"
        defaultValue={50}
        className="mx-[7px] h-[14px] w-[125px] appearance-none bg-linear-to-b from-transparent from-46% via-[#8a8886] via-50% to-transparent to-54% [&::-webkit-slider-thumb]:h-[14px] [&::-webkit-slider-thumb]:w-[6px] [&::-webkit-slider-thumb]:appearance-none [&::-webkit-slider-thumb]:bg-[#777573]"
      />
      <button type="button" aria-label="Acercar">
        <svg viewBox="0 0 10 10" className="h-[10px] w-[10px]" stroke="#333" strokeWidth="1.200"><path d="M5 0v10M0 5h10" /></svg>
      </button>
      <span className="ml-4 w-[31px]">100%</span>
    </div>
  );
}

/* ---------- Barra de tareas ---------- */

function Tarea({ label, w = "w-[62px]", activa, abierta, children }: { label: string; w?: string; activa?: boolean; abierta?: boolean; children: ReactNode }) {
  return (
    <button type="button" aria-label={label} className={`flex h-full shrink-0 flex-col items-center justify-between ${w}`}>
      <span className={`flex flex-1 items-center justify-center pt-px ${activa ? "w-[61px] bg-[#434c55]" : ""}`}>{children}</span>
      <span className={`h-[3px] ${activa ? "w-[61px] bg-[#76b9ed]" : abierta ? "w-[51px] bg-[#76b9ed]" : ""}`} />
    </button>
  );
}

function BarraTareas() {
  return (
    <footer className="flex h-[50px] bg-linear-to-r from-[#071722] via-[#10141a] to-[#0d1828] text-[14px] text-white">
      <Tarea label="Inicio" w="w-[60px]">
        <svg viewBox="0 0 20 20" className="h-5 w-5" fill="#fff"><path d="M0 3l8.500-1.200v7.700H0zM9.500 1.600L20 0v9.500H9.500zM0 10.500h8.500v7.700L0 17zM9.500 10.500H20V20L9.500 18.400z" /></svg>
      </Tarea>
      <Tarea label="Buscar" w="w-[60px]"><Lupa className="h-[21px] w-[21px]" /></Tarea>
      <Tarea label="Vista de tareas" w="w-[60px]">
        <svg viewBox="0 0 20 20" className="h-5 w-5" fill="none" stroke="#fff" strokeWidth="1.300">
          <path d="M1 0v4h11V0M1 7h11v7H1zM1 20v-3h11v3M17.500 0v4M17.500 10v10M16 7h3" />
        </svg>
      </Tarea>
      <Tarea label="Calculadora" w="w-[66px]">
        <svg viewBox="0 0 22 30" className="h-[30px] w-[22px]">
          <path d="M0 0h22v30H0z" fill="#fff" />
          <path d="M2 2h18v5H2zM3 11h3v4zM9 11h3v4zM15 11h3v4zM3 18h3v4zM9 18h3v4zM15 18h3v4zM3 24h3v4zM9 24h3v4zM15 24h3v4z" fill="#0a1a26" />
        </svg>
      </Tarea>
      <Tarea label="Recortes" w="w-[60px]">
        <svg viewBox="0 0 28 30" className="h-[29px] w-[28px]">
          <ellipse cx="9" cy="17" rx="9" ry="5" fill="#8d959c" />
          <ellipse cx="13" cy="9" rx="12" ry="7" fill="#f4f4f4" stroke="#d8342f" strokeWidth="1.500" transform="rotate(-22 13 9)" />
          <path d="M14 3l-2 16M7 9l11 9" stroke="#9aa2a8" strokeWidth="2" />
          <g fill="none" stroke="#2c8ccb" strokeWidth="2.200">
            <ellipse cx="16" cy="24" rx="2.500" ry="5" />
            <ellipse cx="23" cy="19" rx="4.500" ry="2.500" transform="rotate(35 23 19)" />
          </g>
        </svg>
      </Tarea>
      <Tarea label="Desinstalador" w="w-[64px]">
        <svg viewBox="0 0 28 30" className="h-[29px] w-[28px]">
          <path d="M2 6l13 3v19l-4 1L3 24z" fill="#b3202a" />
          <path d="M15 12l7-3v15l-7 5z" fill="#7d1530" />
          <path d="M4 7l6 1v7l-6-1z" fill="#f3dc57" />
          <path d="M4 16l6 1v7l-6-2z" fill="#f07a5f" />
          <path d="M11 10l7-2v7l-7 2z" fill="#5bbf4a" />
          <path d="M10 19l7-1v7l-6 2z" fill="#e9e3ea" />
          <path d="M16 2l4-2 3 4-4 2zM18 8l5 1 1 6-5-1zM17 16l5 2-1 5-4-2z" fill="#a24fd0" />
          <path d="M24 18l3 1-1 3-3-1z" fill="#3ea3e8" />
        </svg>
      </Tarea>
      <Tarea label="Explorador" abierta>
        <svg viewBox="0 0 28 24" className="h-[24px] w-[28px]">
          <path d="M0 1h11l2 3h14v19H0z" fill="#f0b93a" />
          <path d="M0 6h28v17H0z" fill="#fde28f" />
          <path d="M5 24V13h18v11h-5v-6h-8v6z" fill="#3fa9e0" />
        </svg>
      </Tarea>
      <Tarea label="Chrome" abierta>
        <svg viewBox="0 0 28 28" className="h-[28px] w-[28px]">
          <circle cx="14" cy="14" r="13.500" fill="#fbc116" />
          <path d="M14 14l-6 5L2.300 7.200A13.500 13.500 0 0 1 26 8H14z" fill="#dc4437" />
          <path d="M8 17L2.300 7.200A13.500 13.500 0 0 0 12 27.400l5-8z" fill="#269a48" />
          <circle cx="14" cy="14" r="6.500" fill="#fff" />
          <circle cx="14" cy="14" r="5" fill="#4587f3" />
        </svg>
      </Tarea>
      <Tarea label="Excel" abierta activa>
        <svg viewBox="0 0 30 28" className="h-[28px] w-[30px]">
          <path d="M8 1h21v26H8z" fill="#21a366" />
          <path d="M8 1h11v7H8zM19 8h10v7H19z" fill="#107c41" opacity=".6" />
          <path d="M19 1h10v7H19z" fill="#33c481" />
          <path d="M8 15h21v12H8z" fill="#185c37" />
          <path d="M0 7h15v15H0z" fill="#107c41" />
          <path d="M4.500 10.500l6 8M10.500 10.500l-6 8" stroke="#fff" strokeWidth="2" />
        </svg>
      </Tarea>

      <div className="flex flex-1 items-center justify-end">
        <svg viewBox="0 0 20 22" className="h-[20px] w-[18px]" fill="none" stroke="#fff" strokeWidth="1.400">
          <circle cx="13" cy="4" r="3.200" />
          <circle cx="6" cy="12" r="3.200" />
          <path d="M1 21c0-7 10-7 10 0M11 10c4-4 8-1 8 4" />
        </svg>
        <svg viewBox="0 0 16 9" className="ml-[28px] h-[9px] w-[16px]" fill="none" stroke="#fff" strokeWidth="1.400"><path d="M1 8l7-7 7 7" /></svg>
        <svg viewBox="0 0 18 16" className="ml-[12px] h-[16px] w-[18px]" fill="#fff">
          <path d="M4.500 0L9 2.800 4.500 5.600 0 2.800zM13.500 0L18 2.800l-4.500 2.800L9 2.800zM4.500 5.800L9 8.600l-4.500 2.800L0 8.600zM13.500 5.800L18 8.600l-4.500 2.800L9 8.600zM9 10l4.500 2.800L9 15.600l-4.500-2.800z" />
        </svg>
        <svg viewBox="0 0 20 14" className="ml-[12px] h-[14px] w-[20px]" fill="none" stroke="#fff" strokeWidth="1.200">
          <path d="M5 4h14v9H5v-4" />
          <path d="M7 6h10v5H7z" fill="#fff" />
          <path d="M1 0v3M4 0v3M0 3h5v3H0zM2.500 6v4" />
        </svg>
        <svg viewBox="0 0 16 16" className="ml-[14px] h-[16px] w-[16px]" fill="none" stroke="#fff" strokeWidth="1.300">
          <path d="M1 15C1 7 7 1 15 1M5 15C5 9 9 5 15 5M9 15c0-3 3-6 6-6" />
          <circle cx="14" cy="14" r="1.500" fill="#fff" />
        </svg>
        <svg viewBox="0 0 20 16" className="ml-[10px] h-[15px] w-[20px]" fill="none" stroke="#fff" strokeWidth="1.300">
          <path d="M1 5h3l4-4v14l-4-4H1zM11 5c1 2 1 4 0 6M14 3c2 3 2 7 0 10M17 1c3 4 3 10 0 14" />
        </svg>
        <span className="ml-4 w-6">ESP</span>
        <time className="ml-[14px] flex w-[86px] flex-col text-center text-[14px] leading-[23px]">
          <span>19:08</span>
          <span>23-04-2020</span>
        </time>
        <button type="button" aria-label="Notificaciones" className="relative mr-4 ml-[18px] h-[30px] w-[30px]">
          <svg viewBox="0 0 22 22" className="h-[22px] w-[22px]">
            <path d="M0 2h20v16h-6l-4 4v-4H0z" fill="#fff" />
            <path d="M4 6.500h12M4 10h12M4 13.500h12" stroke="#14202c" strokeWidth="1.300" />
          </svg>
          <span className="absolute right-0 -bottom-1 flex h-[20px] w-[20px] items-center justify-center rounded-full border border-[#888] bg-[#2b2b2b] text-[13px] font-bold">3</span>
        </button>
      </div>
      <span className="mr-1 h-full w-px bg-[#5a6570]" />
    </footer>
  );
}

export default function App() {
  return (
    <div className={`flex min-h-screen min-w-0 flex-col overflow-hidden bg-[#666666] ${UI}`}>
      <BarraTitulo />
      <Cinta />
      <AccesoRapido />
      <BarraFormulas />
      <Hoja />
      <Pestanas />
      <BarraEstado />
      <BarraTareas />
    </div>
  );
}
